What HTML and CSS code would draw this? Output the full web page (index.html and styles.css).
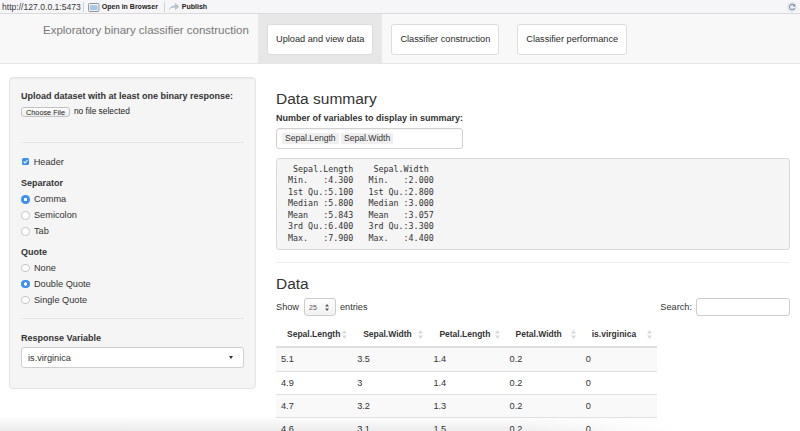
FILE: index.html
```html
<!DOCTYPE html>
<html>
<head>
<meta charset="utf-8">
<title>Exploratory binary classifier construction</title>
<link rel="stylesheet" href="styles.css">
</head>
<body>
<div class="toolbar">
  <span class="tb-url">http://127.0.0.1:5473</span>
  <span class="tb-sep first"></span>
  <span class="tb-btn">
    <svg class="tb-ico" width="12" height="10" viewBox="0 0 12 10"><rect x="0.5" y="1.5" width="10.5" height="8" rx="1" fill="#eef2f6" stroke="#8d99a6"/><rect x="2" y="3.3" width="7.5" height="4.7" fill="#aac5e2"/></svg>
    <span>Open in Browser</span>
  </span>
  <span class="tb-sep second"></span>
  <span class="tb-btn">
    <svg class="tb-ico" width="12" height="9" viewBox="0 0 12 9"><path d="M0.5 8.3 C1.6 4.8 4.2 3.4 7 3.4 V0.8 L11.3 4.5 L7 8.2 V5.6 C4.4 5.6 2.3 6.3 0.5 8.3 Z" fill="#bac3cd"/></svg>
    <span>Publish</span>
  </span>
  <span class="tb-refresh">
    <svg width="10" height="10" viewBox="0 0 10 10"><circle cx="5" cy="5" r="4.4" fill="#eef1f5" stroke="#c3ccd6" stroke-width="0.6"/><path d="M7.3 3.6 A2.6 2.6 0 1 0 7.5 6" fill="none" stroke="#7f8fa3" stroke-width="1.1"/><path d="M8.2 1.8 L8.2 4.5 L5.6 4.5 Z" fill="#7f8fa3"/></svg>
  </span>
</div>

<nav class="navbar">
  <div class="brand">Exploratory binary classifier construction</div>
  <ul class="tabs">
    <li class="tab active"><a href="#">Upload and view data</a></li>
    <li class="tab"><a href="#">Classifier construction</a></li>
    <li class="tab"><a href="#">Classifier performance</a></li>
  </ul>
</nav>

<div class="page">
  <aside class="sidebar">
    <div class="well">
      <div class="lbl">Upload dataset with at least one binary response:</div>
      <div class="file-row">
        <span class="file-btn">Choose File</span>
        <span class="file-text">no file selected</span>
      </div>
      <hr class="sep sep-a">
      <div class="check-row">
        <span class="checkbox"><svg width="7" height="7" viewBox="0 0 7 7"><path d="M1.6 3.6 L3 5 L5.5 2" fill="none" stroke="#fff" stroke-width="1.1"/></svg></span>
        <span>Header</span>
      </div>
      <div class="lbl grp">Separator</div>
      <div class="radios">
        <div class="radio-row"><span class="radio on"></span><span>Comma</span></div>
        <div class="radio-row"><span class="radio"></span><span>Semicolon</span></div>
        <div class="radio-row"><span class="radio"></span><span>Tab</span></div>
      </div>
      <div class="lbl grp2">Quote</div>
      <div class="radios">
        <div class="radio-row"><span class="radio"></span><span>None</span></div>
        <div class="radio-row"><span class="radio on"></span><span>Double Quote</span></div>
        <div class="radio-row"><span class="radio"></span><span>Single Quote</span></div>
      </div>
      <hr class="sep sep-b">
      <div class="lbl resp">Response Variable</div>
      <div class="select">
        <span>is.virginica</span>
        <span class="caret"></span>
      </div>
    </div>
  </aside>

  <main class="main">
    <h3 class="h3 first">Data summary</h3>
    <div class="lbl sum-lbl">Number of variables to display in summary:</div>
    <div class="selectize">
      <span class="chip">Sepal.Length</span>
      <span class="chip">Sepal.Width</span>
    </div>
<pre class="summary">  Sepal.Length    Sepal.Width   
 Min.   :4.300   Min.   :2.000  
 1st Qu.:5.100   1st Qu.:2.800  
 Median :5.800   Median :3.000  
 Mean   :5.843   Mean   :3.057  
 3rd Qu.:6.400   3rd Qu.:3.300  
 Max.   :7.900   Max.   :4.400  </pre>
    <hr class="main-hr">
    <h3 class="h3 second">Data</h3>
    <div class="controls">
      <div class="length">
        <span>Show</span>
        <span class="len-select"><span>25</span><svg width="4" height="7" viewBox="0 0 4 7"><path d="M2 0 L4 2.6 H0 Z M2 7 L0 4.4 H4 Z" fill="#555"/></svg></span>
        <span>entries</span>
      </div>
      <div class="search">
        <span>Search:</span>
        <span class="search-box"></span>
      </div>
    </div>
    <table class="dt">
      <thead>
        <tr>
          <th><div class="th-in"><span>Sepal.Length</span><svg width="5" height="9" viewBox="0 0 5 9"><path d="M2.5 0 L5 3.5 H0 Z M2.5 9 L0 5.5 H5 Z" fill="#d8d8d8"/></svg></div></th>
          <th><div class="th-in"><span>Sepal.Width</span><svg width="5" height="9" viewBox="0 0 5 9"><path d="M2.5 0 L5 3.5 H0 Z M2.5 9 L0 5.5 H5 Z" fill="#d8d8d8"/></svg></div></th>
          <th><div class="th-in"><span>Petal.Length</span><svg width="5" height="9" viewBox="0 0 5 9"><path d="M2.5 0 L5 3.5 H0 Z M2.5 9 L0 5.5 H5 Z" fill="#d8d8d8"/></svg></div></th>
          <th><div class="th-in"><span>Petal.Width</span><svg width="5" height="9" viewBox="0 0 5 9"><path d="M2.5 0 L5 3.5 H0 Z M2.5 9 L0 5.5 H5 Z" fill="#d8d8d8"/></svg></div></th>
          <th><div class="th-in"><span>is.virginica</span><svg width="5" height="9" viewBox="0 0 5 9"><path d="M2.5 0 L5 3.5 H0 Z M2.5 9 L0 5.5 H5 Z" fill="#d8d8d8"/></svg></div></th>
        </tr>
      </thead>
      <tbody>
        <tr><td>5.1</td><td>3.5</td><td>1.4</td><td>0.2</td><td>0</td></tr>
        <tr><td>4.9</td><td>3</td><td>1.4</td><td>0.2</td><td>0</td></tr>
        <tr><td>4.7</td><td>3.2</td><td>1.3</td><td>0.2</td><td>0</td></tr>
        <tr><td>4.6</td><td>3.1</td><td>1.5</td><td>0.2</td><td>0</td></tr>
      </tbody>
    </table>
  </main>
</div>
<div class="shade"></div>
</body>
</html>
```
FILE: styles.css
```css
* { box-sizing: border-box; }
html, body { margin: 0; padding: 0; }
body {
  width: 800px;
  height: 431px;
  overflow: hidden;
  position: relative;
  background: #fff;
  font-family: "Liberation Sans", Arial, Helvetica, sans-serif;
  font-size: 9.2px;
  color: #333;
}

/* top toolbar */
.toolbar {
  height: 14px;
  background: #f6f6f8;
  border-bottom: 1px solid #dadada;
  display: flex;
  align-items: center;
  padding: 0 3px 0 2px;
}
.tb-url { font-size: 8.6px; color: #3a3a3a; }
.tb-sep { width: 1px; height: 10px; background: #d0d0d0; }
.tb-sep.first { margin: 0 4px 0 2px; }
.tb-sep.second { margin: 0 3px 0 6px; }
.tb-btn { display: flex; align-items: center; gap: 2px; font-size: 7px; font-weight: bold; color: #222; }
.tb-refresh { margin-left: auto; display: flex; }

/* navbar */
.navbar {
  height: 50px;
  background: #f8f8f8;
  border-bottom: 1px solid #e7e7e7;
  display: flex;
}
.brand {
  width: 258px;
  flex: none;
  padding: 10px 0 0 43px;
  font-size: 11.5px;
  line-height: 13px;
  color: #777;
  white-space: nowrap;
}
.tabs { display: flex; list-style: none; margin: 0; padding: 0; }
.tab { padding: 10px 9px 0; height: 49px; }
.tab.active { background: #e7e7e7; }
.tab a {
  display: block;
  height: 31px;
  line-height: 29px;
  padding: 0 8px;
  background: #fff;
  border: 1px solid #dcdcdc;
  border-radius: 3px;
  font-size: 9.2px;
  color: #2a2a2a;
  text-decoration: none;
  white-space: nowrap;
}

/* page */
.page { display: flex; padding-top: 13px; }
.sidebar { width: 247px; margin-left: 9px; flex: none; }
.well {
  height: 312px;
  background: #f5f5f5;
  border: 1px solid #e3e3e3;
  border-radius: 4px;
  padding: 12.5px 11px;
  box-shadow: inset 0 1px 1px rgba(0,0,0,0.04);
}
.lbl { font-weight: bold; font-size: 9px; line-height: 11px; color: #333; white-space: nowrap; }
.file-row { margin-top: 5.2px; height: 10px; display: flex; align-items: center; }
.file-btn {
  height: 10px;
  line-height: 9px;
  padding: 0 4px;
  font-size: 7.3px;
  color: #222;
  border: 1px solid #c2c2c2;
  border-radius: 3px;
  background: linear-gradient(#ffffff, #ededed);
}
.file-text { margin-left: 4px; font-size: 8.4px; color: #222; position: relative; top: -1px; }
.sep { border: 0; border-top: 1px solid #e6e6e6; margin: 0; height: 0; }
.sep-a { margin-top: 25px; }
.check-row { margin-top: 12.8px; height: 13px; display: flex; align-items: center; }
.checkbox {
  width: 7px; height: 7px;
  margin: 0 5px 0 0.7px;
  border-radius: 1.5px;
  background: #3d8ff0;
  display: flex;
}
.grp { margin-top: 10px; }
.grp2 { margin-top: 8px; }
.radios { margin-top: 1.8px; }
.radio-row { height: 16px; display: flex; align-items: center; }
.radio {
  width: 8.6px; height: 8.6px;
  margin-right: 4.4px;
  border-radius: 50%;
  background: #fff;
  border: 1px solid #c4c4c4;
  flex: none;
}
.radio.on {
  border: none;
  background: radial-gradient(circle, #fff 0 1.5px, #3b90f2 1.9px);
}
.sep-b { margin-top: 10px; }
.resp { margin-top: 13.5px; }
.select {
  margin-top: 3.5px;
  height: 21px;
  background: #fff;
  border: 1px solid #cfcfcf;
  border-radius: 3px;
  padding: 0 10px 0 6px;
  display: flex;
  align-items: center;
  justify-content: space-between;
}
.caret {
  width: 0; height: 0;
  border-left: 2.6px solid transparent;
  border-right: 2.6px solid transparent;
  border-top: 3.2px solid #333;
}

/* main */
.main { width: 514px; margin-left: 20px; flex: none; }
.h3 { font-size: 15.5px; line-height: 18px; font-weight: normal; margin: 0; color: #333; }
.h3.first { margin-top: 13px; }
.sum-lbl { margin-top: 4.5px; }
.selectize {
  margin-top: 4.2px;
  width: 187px;
  height: 21px;
  border: 1px solid #d0d0d0;
  border-radius: 3px;
  background: #fff;
  box-shadow: inset 0 1px 1px rgba(0,0,0,0.05);
  padding: 4px 0 0 5px;
  display: flex;
  gap: 2.3px;
  align-items: flex-start;
}
.chip {
  height: 11.3px;
  line-height: 11.3px;
  padding: 0 3px;
  background: #efefef;
  font-size: 8.6px;
  color: #333;
}
.summary {
  margin: 9.3px 0 0;
  padding: 5px 6px;
  background: #f5f5f5;
  border: 1px solid #d9d9d9;
  border-radius: 3px;
  font-family: "DejaVu Sans Mono", "Liberation Mono", monospace;
  font-size: 8.35px;
  line-height: 11.5px;
  color: #333;
  white-space: pre;
  overflow: hidden;
}
.main-hr { border: 0; border-top: 1px solid #eee; margin: 12px 0 0; height: 0; }
.h3.second { margin-top: 12px; }
.controls {
  margin-top: 5px;
  height: 18px;
  display: flex;
  justify-content: space-between;
  align-items: center;
}
.length { display: flex; align-items: center; }
.len-select {
  margin: 0 4px 0 5px;
  width: 32px;
  height: 18px;
  border: 1px solid #cdcdcd;
  border-radius: 3px;
  background: linear-gradient(#ffffff, #f1f1f1);
  display: flex;
  align-items: center;
  justify-content: space-between;
  padding: 0 6px 0 4px;
  font-size: 7px;
  color: #555;
}
.search { display: flex; align-items: center; }
.search-box {
  margin-left: 4px;
  width: 94px;
  height: 18px;
  border: 1px solid #cdcdcd;
  border-radius: 3px;
  background: #fff;
}
.dt {
  margin-top: 6px;
  width: 381px;
  table-layout: fixed;
  border-collapse: collapse;
}
.dt th {
  padding: 6px 5px 6px 11px;
  line-height: 12px;
  font-size: 8.5px;
  font-weight: bold;
  text-align: left;
  border-bottom: 2px solid #dedede;
}
.th-in { display: flex; justify-content: space-between; align-items: center; white-space: nowrap; gap: 2px; }
.dt td {
  padding: 5px 5px;
  line-height: 12.3px;
  border-bottom: 1px solid #e0e0e0;
  color: #333;
}
.dt tbody tr:nth-child(odd) td { background: #f9f9f9; }

/* window bottom shadow */
.shade {
  position: absolute;
  left: 0;
  bottom: 0;
  width: 720px;
  height: 15px;
  pointer-events: none;
  background: linear-gradient(to right, rgba(0,0,0,0.08) 0%, rgba(0,0,0,0.07) 70%, rgba(0,0,0,0) 94%);
  -webkit-mask-image: linear-gradient(to bottom, transparent, #000);
  mask-image: linear-gradient(to bottom, transparent, #000);
}
```
